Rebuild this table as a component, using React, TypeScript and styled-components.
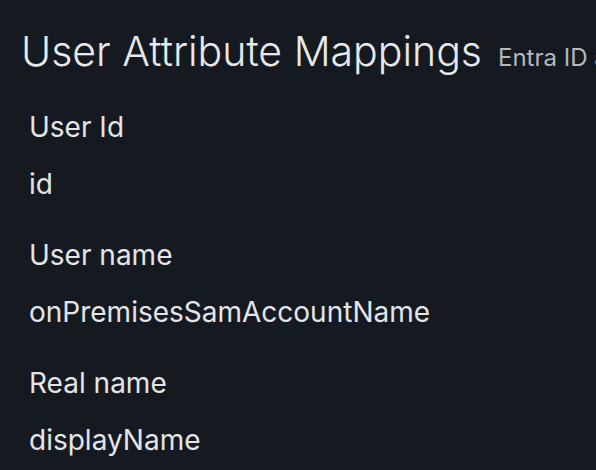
import React from "react";
import styled, { createGlobalStyle } from "styled-components";

const Global = createGlobalStyle`
  html, body { margin: 0; padding: 0; background: #151a21; }
  body { font-family: Inter, "Noto Sans", sans-serif; color: #e3e5e8; overflow: hidden; }
`;

const Page = styled.div`
  width: 596px;
  height: 470px;
  overflow: hidden;
  background: #151a21;
  padding: 27px 0 0 21px;
  box-sizing: border-box;
`;

const Header = styled.div`
  display: flex;
  align-items: baseline;
  gap: 16px;
  white-space: nowrap;
`;

const Title = styled.h1`
  margin: 0;
  font-size: 41px;
  font-weight: 300;
  line-height: 48px;
  color: #e8e9eb;
`;

const Subtitle = styled.span`
  font-size: 24px;
  font-weight: 400;
  color: #b4b8bf;
`;

const List = styled.dl`
  margin: 36px 0 0 8px;
  display: flex;
  flex-direction: column;
  gap: 39px;
`;

const Group = styled.div`
  display: flex;
  flex-direction: column;
  gap: 25px;
`;

const Label = styled.dt`
  font-size: 28px;
  line-height: 32px;
  color: #e3e5e8;
`;

const Value = styled.dd`
  margin: 0;
  font-size: 28px;
  line-height: 32px;
  color: #e3e5e8;
`;

const mappings = [
  { label: "User Id", value: "id" },
  { label: "User name", value: "onPremisesSamAccountName" },
  { label: "Real name", value: "displayName" },
];

export default function App() {
  return (
    <>
      <Global />
      <Page>
        <Header>
          <Title>User Attribute Mappings</Title>
          <Subtitle>Entra ID attributes</Subtitle>
        </Header>
        <List>
          {mappings.map((m) => (
            <Group key={m.label}>
              <Label>{m.label}</Label>
              <Value>{m.value}</Value>
            </Group>
          ))}
        </List>
      </Page>
    </>
  );
}
